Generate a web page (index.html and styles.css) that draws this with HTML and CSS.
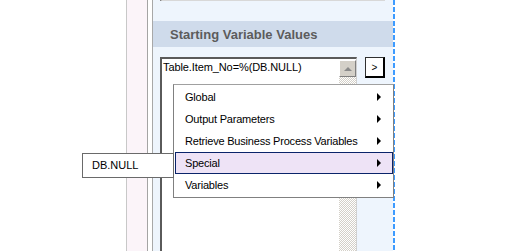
FILE: index.html
```html
<!DOCTYPE html>
<html lang="en">
<head>
    <meta charset="UTF-8">
    <title>Starting Variable Values</title>
    <link rel="stylesheet" href="styles.css">
</head>
<body>
    <div class="workspace">
        <div class="left-gap"></div>
        <div class="side-strip"></div>
        <div class="panel">
            <div class="top-box"></div>
            <div class="section-header">Starting Variable Values</div>
            <div class="value-row">
                <div class="value-box">
                    <div class="value-text">Table.Item_No=%(DB.NULL)</div>
                    <div class="scrollbar">
                        <div class="scroll-up"><span class="up-arrow"></span></div>
                        <div class="scroll-track"></div>
                    </div>
                </div>
                <button class="insert-button">&gt;</button>
            </div>
        </div>
        <div class="drop-line"></div>
    </div>

    <div class="context-menu">
        <div class="menu-item">Global <span class="arrow"></span></div>
        <div class="menu-item">Output Parameters <span class="arrow"></span></div>
        <div class="menu-item">Retrieve Business Process Variables <span class="arrow"></span></div>
        <div class="menu-item active">Special <span class="arrow"></span></div>
        <div class="menu-item">Variables <span class="arrow"></span></div>
    </div>
    <div class="sub-menu">
        <div class="sub-item">DB.NULL</div>
    </div>
</body>
</html>
```

FILE: styles.css
```css
body {
    margin: 0;
    background: #fff;
    font-family: "Liberation Sans", Arial, sans-serif;
    font-size: 11px;
    color: #000;
    overflow: hidden;
}
.workspace {
    display: flex;
    height: 251px;
}
.left-gap {
    width: 126px;
}
.side-strip {
    width: 20px;
    border-left: 1px solid #c8c8c8;
    border-right: 1px solid #a4a4a4;
    background-color: #fbf4f9;
    background-image: radial-gradient(#f1e6ee 0.6px, transparent 0.7px);
    background-size: 2px 2px;
    margin-right: 4px;
}
.panel {
    width: 240px;
    border-left: 1px solid #a8a8a8;
    background: #eef5fd;
    display: flex;
    flex-direction: column;
}
.top-box {
    height: 7px;
    margin: 0 8px 0 7px;
    background: #f7fafe;
    border-left: 2px solid #6a6a6a;
    border-right: 1px solid #d8d8d8;
    border-bottom: 1px solid #d8d8d8;
}
.section-header {
    margin-top: 20px;
    height: 26px;
    line-height: 27px;
    padding-left: 17px;
    background-color: #cfdbeb;
    background-image: radial-gradient(#c7d3e4 0.6px, transparent 0.7px);
    background-size: 2px 2px;
    color: #5c5c5c;
    font-size: 13px;
    font-weight: bold;
}
.value-row {
    display: flex;
    align-items: flex-start;
    margin-top: 10px;
    padding-left: 7px;
    gap: 8px;
}
.value-box {
    width: 194px;
    height: 200px;
    display: flex;
    background: #fff;
    border-top: 2px solid #5a5a5a;
    border-left: 2px solid #5a5a5a;
    border-right: 1px solid #d0d0d0;
}
.value-text {
    flex: 1;
    padding: 1px 0 0 1px;
    font-size: 11px;
    letter-spacing: -0.1px;
    line-height: 15px;
}
.scrollbar {
    width: 17px;
    display: flex;
    flex-direction: column;
}
.scroll-up {
    height: 15px;
    margin-top: 1px;
    background: #d4d0c8;
    border-top: 1px solid #fff;
    border-left: 1px solid #fff;
    border-right: 1px solid #808080;
    border-bottom: 1px solid #808080;
    display: flex;
    align-items: center;
    justify-content: center;
}
.up-arrow {
    width: 0;
    height: 0;
    border-left: 4px solid transparent;
    border-right: 4px solid transparent;
    border-bottom: 4px solid #8a8a8a;
}
.scroll-track {
    flex: 1;
    background-color: #fff;
    background-image: repeating-conic-gradient(#d4d0c8 0 25%, #fff 0 50%);
    background-size: 2px 2px;
}
.insert-button {
    width: 20px;
    height: 21px;
    padding: 0;
    margin: 0;
    background: #fff;
    border-top: 1px solid #303030;
    border-left: 1px solid #303030;
    border-right: 2px solid #000;
    border-bottom: 2px solid #000;
    font-family: "Liberation Sans", Arial, sans-serif;
    font-size: 10px;
    color: #000;
}
.drop-line {
    width: 2px;
    background-image: repeating-linear-gradient(to bottom, #3d9bff 0 5px, transparent 5px 7px);
}
.context-menu {
    position: absolute;
    left: 173px;
    top: 84px;
    width: 218px;
    padding: 1px 0 1px 1px;
    background: #fff;
    border: 1px solid #808080;
    border-top-color: #a0a0a0;
    letter-spacing: -0.2px;
}
.menu-item {
    position: relative;
    height: 22px;
    line-height: 22px;
    padding-left: 9px;
    border: 1px solid transparent;
    border-width: 0 1px;
}
.menu-item.active {
    background: #eee3f6;
    border: 1px solid #0a246a;
    height: 20px;
    line-height: 20px;
}
.arrow {
    position: absolute;
    right: 11px;
    top: 7px;
    width: 0;
    height: 0;
    border-top: 4px solid transparent;
    border-bottom: 4px solid transparent;
    border-left: 4px solid #000;
}
.menu-item.active .arrow {
    top: 6px;
}
.sub-menu {
    position: absolute;
    left: 82px;
    top: 153px;
    width: 90px;
    height: 23px;
    background: #fff;
    border: 1px solid #6a6a6a;
}
.sub-item {
    line-height: 23px;
    padding-left: 9px;
}
```
